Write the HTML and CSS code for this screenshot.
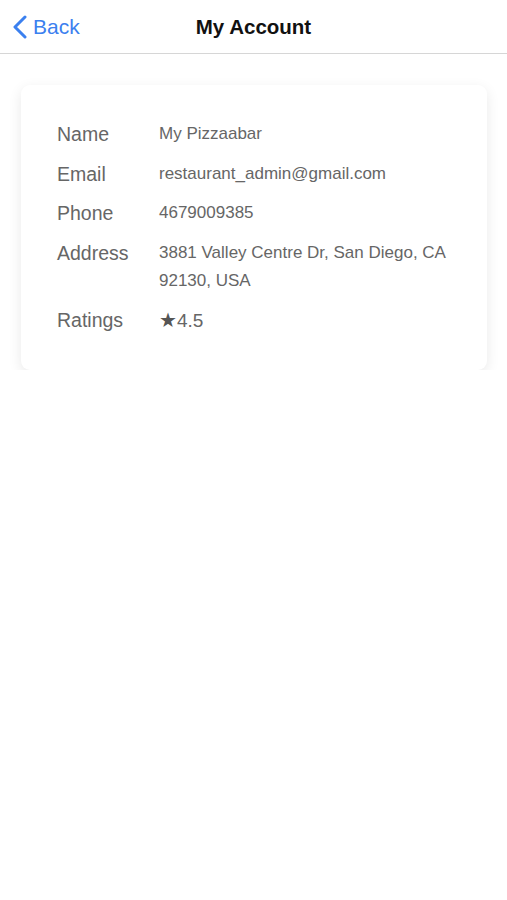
FILE: index.html
```html
<!DOCTYPE html>
<html lang="en">
<head>
    <meta charset="UTF-8">
    <meta name="viewport" content="width=device-width, initial-scale=1.0">
    <title>My Account</title>
    <link rel="stylesheet" href="styles.css">
</head>
<body>

    <!-- Top Navigation Bar -->
    <header class="nav-bar">
        <a class="back-link" href="#">
            <svg class="back-icon" width="16" height="24" viewBox="0 0 16 24">
                <path d="M13 2 L3 12 L13 22" fill="none" stroke="currentColor" stroke-width="3" stroke-linecap="round" stroke-linejoin="round"/>
            </svg>
            <span>Back</span>
        </a>
        <h1 class="nav-title">My Account</h1>
    </header>

    <!-- Account Details Card -->
    <main class="content">
        <div class="account-card">
            <div class="info-row">
                <span class="info-label">Name</span>
                <span class="info-value">My Pizzaabar</span>
            </div>
            <div class="info-row">
                <span class="info-label">Email</span>
                <span class="info-value">restaurant_admin@gmail.com</span>
            </div>
            <div class="info-row">
                <span class="info-label">Phone</span>
                <span class="info-value">4679009385</span>
            </div>
            <div class="info-row">
                <span class="info-label">Address</span>
                <span class="info-value">3881 Valley Centre Dr, San Diego, CA 92130, USA</span>
            </div>
            <div class="info-row">
                <span class="info-label">Ratings</span>
                <span class="info-value rating"><span class="star">&#9733;</span>4.5</span>
            </div>
        </div>
    </main>

</body>
</html>
```

FILE: styles.css
```css
/* General Styles */
body {
    font-family: "Liberation Sans", Arial, sans-serif;
    background-color: #fff;
    margin: 0;
    color: #666;
}

/* Navigation Bar */
.nav-bar {
    position: relative;
    height: 54px;
    border-bottom: 1px solid #d6d6d6;
    display: flex;
    align-items: center;
    justify-content: center;
    padding-top: 1px;
    box-sizing: border-box;
}

.back-link {
    position: absolute;
    left: 12px;
    top: 15px;
    display: flex;
    align-items: center;
    gap: 5px;
    color: #3b80ef;
    text-decoration: none;
    font-size: 21px;
}

.back-icon {
    display: block;
}

.nav-title {
    margin: 0;
    font-size: 20.5px;
    font-weight: bold;
    color: #111;
}

/* Card */
.content {
    padding: 31px 20px 0 21px;
}

.account-card {
    background-color: #fff;
    border-radius: 9px;
    box-shadow: 0 4px 14px rgba(0, 0, 0, 0.09);
    padding: 35px 30px 35px 36px;
    display: flex;
    flex-direction: column;
    gap: 11.5px;
}

.info-row {
    display: flex;
    align-items: flex-start;
}

.info-label {
    width: 102px;
    flex-shrink: 0;
    font-size: 19.5px;
    line-height: 28px;
    color: #666;
}

.info-value {
    font-size: 17px;
    line-height: 28px;
    color: #666;
}

.rating {
    font-size: 19px;
    color: #666;
}

.star {
    color: #555;
    font-family: "DejaVu Sans", sans-serif;
    font-size: 20px;
}
```
